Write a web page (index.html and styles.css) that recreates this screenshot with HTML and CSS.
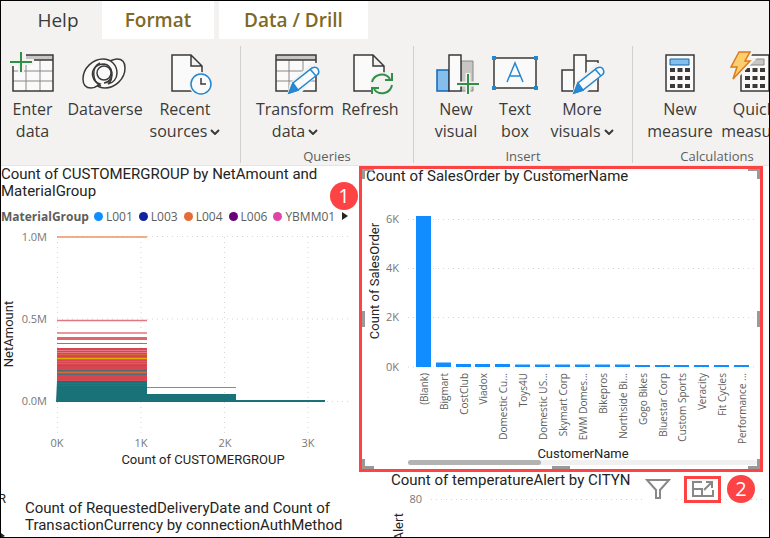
FILE: index.html
```html
<!DOCTYPE html>
<html lang="en">
<head>
<meta charset="utf-8">
<title>Report view</title>
<link rel="stylesheet" href="styles.css">
</head>
<body>
<header class="ribbon">
  <nav class="tabs">
    <button class="tab tab-plain">Help</button>
    <button class="tab tab-context">Format</button>
    <button class="tab tab-context tab-wide">Data / Drill</button>
  </nav>
  <div class="groups">
    <section class="group group-data">
      <div class="tools">
        <button class="tool">
          <svg class="icon" viewBox="0 0 48 46"><path class="paper" d="M4 10h40v31H4z"/><path d="M17 5h27v5H17z" fill="#c8c6c4"/><path class="grid" d="M4 21h40M4 31h40M17 12v29M31 10v31"/><path class="ink" d="M17 5h27v36H4V16M17 10h27"/><path d="M0 12h25M12 2v21" stroke="#f3f2f1" stroke-width="6"/><path class="green" d="M1 12h22M12 2v20"/></svg>
          <span>Enter<br>data</span>
        </button>
        <button class="tool">
          <svg class="icon" viewBox="0 0 48 46"><g class="ink"><path class="paper" d="M36 9C42 9 44 13 44 18C44 29 34 38 24 38C16 38 10 32 10 24C10 18 14 14 20 13C27 13 31 9 36 9Z"/><path class="paper" d="M10 38C4 38 2 34 2 29C2 18 12 9 22 9C30 9 36 15 36 23C36 29 32 33 27 34C33 29 32 15 23 14C14 14 10 21 12 27C13 31 16 33 19 34C16 36 14 38 10 38Z"/><path d="M19 13C10 17 11 32 20 36"/><circle class="paper" cx="23" cy="23" r="7"/><path d="M29 18C33 24 30 32 23 33"/></g></svg>
          <span>Dataverse</span>
        </button>
        <button class="tool">
          <svg class="icon" viewBox="0 0 48 46"><path class="ink paper" d="M11 5h19l11 11v25H11zM30 5v11h11"/><circle cx="40" cy="34" r="12" fill="#f3f2f1"/><circle class="blue paper" cx="40" cy="34" r="10"/><path class="ink" d="M40 28v6h5"/></svg>
          <span>Recent<br>sources<svg class="chev" viewBox="0 0 10 6"><path d="M1 1l4 4 4-4"/></svg></span>
        </button>
      </div>
    </section>
    <section class="group group-queries">
      <div class="tools">
        <button class="tool">
          <svg class="icon" viewBox="0 0 48 46"><path class="paper" d="M5 5h40v36H5z"/><path d="M5 5h40v5H5z" fill="#c8c6c4"/><path class="grid" d="M5 21h40M5 31h40M18 10v31M32 10v31"/><path class="ink" d="M5 5h40v36H5zM5 10h40"/><path d="M16 46l3-13 21-20h9v7L28 46z" fill="#f3f2f1"/><path class="blue paper" d="M18 43l4-10 19-15q4-2 6 1 2 4-1 6L27 40z"/><path class="blue" d="M18 43l4-10 5 7z" fill="#2b88d8"/><path class="blue" d="M39 19l6 7"/></svg>
          <span>Transform<br>data<svg class="chev" viewBox="0 0 10 6"><path d="M1 1l4 4 4-4"/></svg></span>
        </button>
        <button class="tool">
          <svg class="icon" viewBox="0 0 48 46"><path class="ink paper" d="M8 5h19l11 11v25H8zM27 5v11h11"/><circle cx="36" cy="34" r="12" fill="#f3f2f1"/><path class="green" d="M26 32a10 10 0 0 1 18-3M46 23v7h-7M46 35a10 10 0 0 1-18 4M26 44v-6h7"/></svg>
          <span>Refresh</span>
        </button>
      </div>
      <h2 class="group-name">Queries</h2>
    </section>
    <section class="group group-insert">
      <div class="tools">
        <button class="tool">
          <svg class="icon" viewBox="0 0 48 46"><path d="M5 20h12v21H5z" fill="#83beec" stroke="#1068b5" stroke-width="1.500"/><path d="M29 11h12v30H29z" fill="#c8c6c4" stroke="#8a8886"/><path class="ink paper" d="M17 5h12v36H17z"/><path d="M25 34h23M36 23v22" stroke="#f3f2f1" stroke-width="5"/><path class="green" d="M25 34h22M36 24v20"/></svg>
          <span>New<br>visual</span>
        </button>
        <button class="tool">
          <svg class="icon" viewBox="0 0 48 46"><path class="ink paper" d="M3 8h42v30H3z"/><path d="M1 6h4v4H1zM43 6h4v4h-4zM1 36h4v4H1zM43 36h4v4h-4z" fill="#2488d0"/><path class="blue" d="M16 32l8-19 8 19M19 26h10"/></svg>
          <span>Text<br>box</span>
        </button>
        <button class="tool">
          <svg class="icon" viewBox="0 0 48 46"><path class="ink paper" d="M4 20h12v21H4zM28 11h12v30H28zM16 5h12v36H16z"/><path d="M14 46l3-13 21-20h9v7L26 46z" fill="#f3f2f1"/><path class="blue paper" d="M16 43l4-10 19-15q4-2 6 1 2 4-1 6L25 40z"/><path class="blue" d="M16 43l4-10 5 7z" fill="#2b88d8"/><path class="blue" d="M37 19l6 7"/></svg>
          <span>More<br>visuals<svg class="chev" viewBox="0 0 10 6"><path d="M1 1l4 4 4-4"/></svg></span>
        </button>
      </div>
      <h2 class="group-name">Insert</h2>
    </section>
    <section class="group group-calc">
      <div class="tools">
        <button class="tool">
          <svg class="icon" viewBox="0 0 48 46"><path class="ink paper" d="M10 5h28v36H10z"/><path d="M14 9h19v6H14z" fill="#83beec" stroke="#1068b5"/><path class="keys" d="M14 20h20M14 28h20M14 36h20"/></svg>
          <span>New<br>measure</span>
        </button>
        <button class="tool">
          <svg class="icon" viewBox="0 0 48 46"><path class="ink paper" d="M11 5h28v36H11z"/><path d="M19 9h15v6H19z" fill="#c8c6c4" stroke="#8a8886"/><path class="keys" d="M15 20h20M15 28h20M15 36h20"/><path d="M9 2h11l-5 9h5L3 29l4-12H1z" fill="#fbcf70" stroke="#f3f2f1" stroke-width="6"/><path d="M9 2h11l-5 9h5L3 29l4-12H1z" fill="#fbcf70" stroke="#dd7a1a" stroke-width="1.500"/></svg>
          <span>Quick<br>measure</span>
        </button>
      </div>
      <h2 class="group-name">Calculations</h2>
    </section>
  </div>
</header>

<main class="canvas">
  <div class="column">
    <article class="visual">
      <h2 class="title">Count of CUSTOMERGROUP by NetAmount and MaterialGroup</h2>
      <div class="legend">
        <strong>MaterialGroup</strong>
        <ul>
          <li class="c1">L001</li><li class="c2">L003</li><li class="c3">L004</li><li class="c4">L006</li><li class="c5">YBMM01</li>
        </ul>
        <button class="next" aria-label="Next"></button>
      </div>
      <span class="badge badge-one">1</span>
      <svg class="chart" viewBox="1 226 358 244">
        <path class="gridline" d="M57 236.500H350M57 319H350M57 401.500H350M57.500 237V435M141 237V435M224.500 237V435M308 237V435"/>
        <g class="ticks"><text x="47" y="241" text-anchor="end">1.0M</text><text x="47" y="323" text-anchor="end">0.5M</text><text x="47" y="405" text-anchor="end">0.0M</text></g>
        <g class="ticks mid"><text x="57" y="447">0K</text><text x="141" y="447">1K</text><text x="225" y="447">2K</text><text x="308" y="447">3K</text></g>
        <path d="M57 237h90" stroke="#ee935f" stroke-width="1.500"/>
        <path d="M57 320.500h90M57 333h90" stroke="#e2787f" stroke-width="1.500"/>
        <path d="M57 338.500h90" stroke="#e0656a" stroke-width="3"/>
        <path d="M57 343.500h90" stroke="#8b6bd0"/>
        <path d="M57 348h90v34H57z" fill="#d64550"/>
        <path d="M57 350.500h90M57 352.500h90" stroke="#e57985"/>
        <path d="M57 354.500h90M57 361.500h90M57 363.500h90M57 372.500h90" stroke="#d9663d"/>
        <path d="M57 358.500h90" stroke="#d9b300" stroke-width="1.500"/>
        <path d="M57 365.500h90" stroke="#a05078"/>
        <path d="M57 370.500h90M57 374.500h90" stroke="#536b72"/>
        <path d="M57 381h90v13h89v6h89v2H56z" fill="#197278"/>
        <path d="M57 383.500h90M57 385.500h90" stroke="#5a5f69"/>
        <path d="M147 387.500h89" stroke="#5c9da1"/>
        <text class="axis" x="203" y="464" text-anchor="middle">Count of CUSTOMERGROUP</text>
        <text class="axis" transform="translate(13 334) rotate(-90)" text-anchor="middle">NetAmount</text>
      </svg>
    </article>
    <article class="visual visual-low">
      <svg class="scrap" viewBox="0 0 10 48" aria-hidden="true"><text class="axis" x="-3" y="13">R</text><path d="M0 43l4 3-4 2z" fill="#252423"/></svg>
      <h2 class="title">Count of RequestedDeliveryDate and Count of TransactionCurrency by connectionAuthMethod</h2>
    </article>
  </div>

  <div class="column">
    <article class="visual selected">
      <i class="grip tl"></i><i class="grip tm"></i><i class="grip tr"></i><i class="grip ml"></i><i class="grip mr"></i><i class="grip bl"></i><i class="grip bm"></i><i class="grip br"></i>
      <h2 class="title">Count of SalesOrder by CustomerName</h2>
      <svg class="chart" viewBox="362 184 398 276">
        <path class="gridline" d="M408 219.500H757M408 268.500H757M408 317.500H757M408 367H757"/>
        <g class="ticks"><text x="399" y="223" text-anchor="end">6K</text><text x="399" y="272" text-anchor="end">4K</text><text x="399" y="321" text-anchor="end">2K</text><text x="399" y="371" text-anchor="end">0K</text></g>
        <path class="bars" d="M416 216h15v151h-15zM436 362.500h15v4.500h-15zM456 364h15v3h-15zM475 364h15v3h-15zM495 364h15v3h-15zM515 364.500h15v2.500h-15zM535 364.500h15v2.500h-15zM555 364.500h15v2.500h-15zM575 364.500h15v2.500h-15zM595 364.500h15v2.500h-15zM615 364.500h15v2.500h-15zM635 365h15v2h-15zM655 365h15v2h-15zM674 365h15v2h-15zM694 365h15v2h-15zM714 365h15v2h-15zM734 365h15v2h-15z"/>
        <g class="names">
          <text transform="translate(428 373) rotate(-90)">(Blank)</text>
          <text transform="translate(448 373) rotate(-90)">Bigmart</text>
          <text transform="translate(468 373) rotate(-90)">CostClub</text>
          <text transform="translate(487 373) rotate(-90)">Viadox</text>
          <text transform="translate(507 373) rotate(-90)">Domestic Cu...</text>
          <text transform="translate(527 373) rotate(-90)">Toys4U</text>
          <text transform="translate(547 373) rotate(-90)">Domestic US...</text>
          <text transform="translate(567 373) rotate(-90)">Skymart Corp</text>
          <text transform="translate(587 373) rotate(-90)">EWM Domes...</text>
          <text transform="translate(607 373) rotate(-90)">Bikepros</text>
          <text transform="translate(627 373) rotate(-90)">Northside Bi...</text>
          <text transform="translate(647 373) rotate(-90)">Gogo Bikes</text>
          <text transform="translate(667 373) rotate(-90)">Bluestar Corp</text>
          <text transform="translate(686 373) rotate(-90)">Custom Sports</text>
          <text transform="translate(706 373) rotate(-90)">Veracity</text>
          <text transform="translate(726 373) rotate(-90)">Fit Cycles</text>
          <text transform="translate(746 373) rotate(-90)">Performance ...</text>
        </g>
        <text class="axis" x="583" y="458" text-anchor="middle">CustomerName</text>
        <text class="axis" transform="translate(379 281) rotate(-90)" text-anchor="middle">Count of SalesOrder</text>
      </svg>
      <div class="scroll"><div class="thumb"></div></div>
    </article>
    <article class="visual visual-temp">
      <div class="temp-head">
        <h2 class="title">Count of temperatureAlert by CITYN</h2>
        <div class="actions">
          <button class="action" aria-label="Filters"><svg viewBox="0 0 26 22"><path d="M2 2h22l-9 10v8h-4v-8z"/></svg></button>
          <button class="action focus" aria-label="Focus mode"><svg viewBox="0 0 24 20"><path d="M11 3H2v14h20v-6M2 10h9v7M13 11l8-8M15 3h6v6"/></svg></button>
          <span class="badge">2</span>
        </div>
      </div>
      <svg class="chart" viewBox="359 491 404 60">
        <path class="gridline" d="M431 499.500H763"/>
        <text class="ticks" x="422" y="503" text-anchor="end">80</text>
        <text class="axis" transform="translate(403 513) rotate(-90)" text-anchor="end">Count of temperatureAlert</text>
      </svg>
    </article>
  </div>
</main>
</body>
</html>
```
FILE: styles.css
```css
* { box-sizing: border-box; }

body {
  margin: 0;
  height: 100vh;
  overflow: hidden;
  display: flex;
  flex-direction: column;
  position: relative;
  background: #fff;
  color: #252423;
  font-family: "Open Sans", "Noto Sans", sans-serif;
}

body::after {
  content: "";
  position: absolute;
  inset: 0;
  border: 1px solid #000;
  pointer-events: none;
}

h2, ul { margin: 0; padding: 0; font-weight: 400; }
button { border: 0; padding: 0; background: none; color: inherit; font: inherit; }
svg { display: block; }

.ribbon { flex: none; background: #f3f2f1; padding: 1px 0 2px 1px; border-bottom: 1px solid #e6e5e4; overflow: hidden; }
.tabs { display: flex; gap: 5px; height: 38px; }
.tab { font-size: 19px; line-height: 36px; padding: 0; color: #3b3a39; white-space: nowrap; }
.tab-plain { width: 96px; padding-left: 18px; }
.tab-context { width: 112px; background: #fff; color: #806828; font-weight: 600; }
.tab-wide { width: 149px; }

.groups { display: flex; padding-top: 7px; }
.group { flex: none; height: 117px; display: flex; flex-direction: column; justify-content: space-between; border-right: 1px solid #d2d0ce; }
.group:last-child { border-right: 0; }
.tools { display: grid; }
.group-data .tools { grid-template-columns: 63px 82px 78px; padding-right: 16px; }
.group-queries .tools { grid-template-columns: 84px 66px; padding: 0 10px 0 12px; }
.group-insert .tools { grid-template-columns: 60px 58px 76px; padding: 0 12px; }
.group-calc .tools { grid-template-columns: 74px 74px; padding: 0 10px; }
.tool { display: flex; flex-direction: column; align-items: center; gap: 2px; font-size: 16px; line-height: 22px; color: #3b3a39; padding-top: 4px; white-space: nowrap; }
.group-name { text-align: center; font-size: 13px; line-height: 14px; color: #605e5c; }

.icon { width: 48px; height: 46px; overflow: visible; fill: none; }
.paper { fill: #fafafa; }
.ink { stroke: #3b3a39; stroke-width: 1.5; }
.grid { stroke: #8a8886; stroke-width: 1; }
.green { stroke: #309048; stroke-width: 2; }
.blue { stroke: #2488d0; stroke-width: 1.5; }
.keys { stroke: #3b3a39; stroke-width: 4; stroke-dasharray: 5 2.5; }
.chev { display: inline-block; width: 10px; height: 6px; margin-left: 3px; vertical-align: 2px; fill: none; stroke: #3b3a39; stroke-width: 2; }

.canvas { flex: 1; min-height: 0; display: grid; grid-template-columns: 358fr 404fr; padding: 0 7px 0 1px; }
.column { min-width: 0; }
.visual { position: relative; }
.title { font-family: Roboto, sans-serif; font-size: 15px; line-height: 17px; }
.chart { width: 100%; height: auto; overflow: visible; }

.legend { display: flex; align-items: center; height: 20px; margin-top: 6px; padding-right: 11px; font-size: 12px; color: #605e5c; }
.legend ul { display: flex; gap: 6px; margin-left: 5px; list-style: none; }
.legend li { display: flex; align-items: center; gap: 3px; }
.legend li::before { content: ""; width: 9px; height: 9px; border-radius: 50%; background: currentColor; }
.c1::before { color: #118dff; }
.c2::before { color: #12239e; }
.c3::before { color: #e66c37; }
.c4::before { color: #6b007b; }
.c5::before { color: #e044a7; }
.next { margin-left: auto; border-left: 6px solid #252423; border-top: 4px solid transparent; border-bottom: 4px solid transparent; }

.gridline { fill: none; stroke: #d6d6d6; stroke-dasharray: 1 4; }
.ticks { font-size: 11px; fill: #777; }
.mid { text-anchor: middle; }
.axis { font-family: Roboto, sans-serif; font-size: 13px; fill: #252423; }
.names { font-size: 10px; fill: #605e5c; text-anchor: end; }
.bars { fill: #118dff; }

.badge { display: grid; place-items: center; width: 28px; height: 28px; border-radius: 50%; background: #fd4343; color: #fff; font-size: 20px; line-height: 28px; }
.badge-one { position: absolute; top: 16px; right: 1px; }

.visual-low { padding: 30px 0 0 24px; }
.scrap { position: absolute; left: 0; top: 20px; width: 10px; height: 48px; }

.selected { border: 3px solid #fd4343; padding-bottom: 4px; }
.selected .title { padding-left: 4px; line-height: 15px; }
.scroll { height: 5px; margin: 0 3px 0 46px; border-radius: 3px; background: #f0f0f0; }
.thumb { width: 38%; height: 5px; border-radius: 3px; background: #b3b3b3; }
.grip { position: absolute; width: 12px; height: 10px; border: 0 solid #999; }
.tl { top: 0; left: 0; border-width: 2px 0 0 3px; }
.tm { top: 0; left: calc(50% - 9px); width: 18px; height: 2px; background: #999; }
.tr { top: 0; right: 0; border-width: 2px 3px 0 0; }
.ml, .mr { top: calc(50% - 8px); width: 3px; height: 16px; background: #999; }
.ml { left: 0; }
.mr { right: 0; }
.bl { bottom: 0; left: 0; border-width: 0 0 3px 3px; }
.bm { bottom: 0; left: calc(50% - 9px); width: 18px; height: 3px; background: #999; }
.br { bottom: 0; right: 0; border-width: 0 3px 3px 0; }

.temp-head { display: flex; justify-content: space-between; height: 19px; padding-left: 32px; }
.temp-head .title { white-space: nowrap; }
.actions { position: absolute; z-index: 1; top: 3px; right: 8px; display: flex; align-items: center; gap: 6px; }
.action { width: 28px; height: 24px; padding: 0 1px; background: #fff; }
.action svg { width: 26px; height: 22px; fill: none; stroke: #8a8886; stroke-width: 2; }
.focus { width: 37px; height: 27px; margin-left: 6px; border: 3px solid #fd4343; display: grid; place-items: center; }
.focus svg { width: 24px; height: 20px; }
```
